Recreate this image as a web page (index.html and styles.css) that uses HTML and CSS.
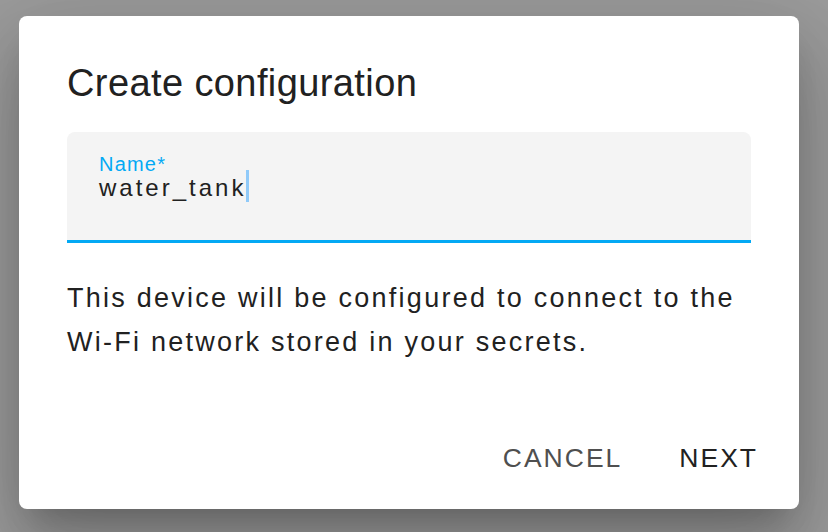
FILE: index.html
```html
<!DOCTYPE html>
<html lang="en">

<head>
    <meta charset="UTF-8">
    <meta name="viewport" content="width=device-width, initial-scale=1.0">
    <title>Create configuration</title>
    <link rel="stylesheet" href="styles.css">
</head>

<body>
    <div class="dialog">
        <h2 class="dialog-title">Create configuration</h2>

        <div class="field">
            <label class="field-label" for="name">Name*</label>
            <div class="field-value" id="name">water_tank<span class="caret"></span></div>
        </div>

        <p class="dialog-text">
            This device will be configured to connect to the
            Wi-Fi network stored in your secrets.
        </p>

        <div class="actions">
            <button class="btn btn-secondary">Cancel</button>
            <button class="btn">Next</button>
        </div>
    </div>
</body>

</html>
```

FILE: styles.css
```css
html,
body {
    margin: 0;
    height: 100%;
}

body {
    background: #9c9c9c;
    font-family: "Liberation Sans", Arial, sans-serif;
    color: #212121;
    display: flex;
    align-items: flex-start;
}

.dialog {
    margin: 16px 0 0 19px;
    width: 780px;
    height: 493px;
    box-sizing: border-box;
    padding: 47px 48px 0 48px;
    background: #fff;
    border-radius: 8px;
    display: flex;
    flex-direction: column;
    box-shadow: 0 22px 30px -14px rgba(0, 0, 0, 0.2),
        0 48px 76px 6px rgba(0, 0, 0, 0.14),
        0 18px 92px 16px rgba(0, 0, 0, 0.12);
}

.dialog-title {
    margin: 0;
    font-size: 38px;
    font-weight: 400;
    line-height: 40px;
    letter-spacing: 0.4px;
}

.field {
    margin-top: 29px;
    height: 111px;
    box-sizing: border-box;
    background: #f4f4f4;
    border-radius: 8px 8px 0 0;
    border-bottom: 3px solid #03a9f4;
    padding: 21px 32px 0 32px;
}

.field-label {
    display: block;
    color: #03a9f4;
    font-size: 20px;
    line-height: 22px;
    letter-spacing: 1.2px;
}

.field-value {
    margin-top: -5px;
    font-size: 24px;
    line-height: 24px;
    letter-spacing: 3px;
}

.caret {
    display: inline-block;
    width: 3px;
    height: 32px;
    margin-left: 0;
    background: #90caf9;
    vertical-align: -6px;
}

.dialog-text {
    margin: 33px 0 0 0;
    font-size: 27px;
    line-height: 44px;
    letter-spacing: 2.25px;
}

.actions {
    margin-top: auto;
    margin-right: -7px;
    padding-bottom: 36px;
    display: flex;
    justify-content: flex-end;
    gap: 57px;
}

.btn {
    border: 0;
    background: none;
    padding: 0;
    font-family: inherit;
    font-size: 26.5px;
    line-height: 30px;
    letter-spacing: 2px;
    text-transform: uppercase;
    color: #212121;
}

.btn-secondary {
    color: #4f4f4f;
}
```
